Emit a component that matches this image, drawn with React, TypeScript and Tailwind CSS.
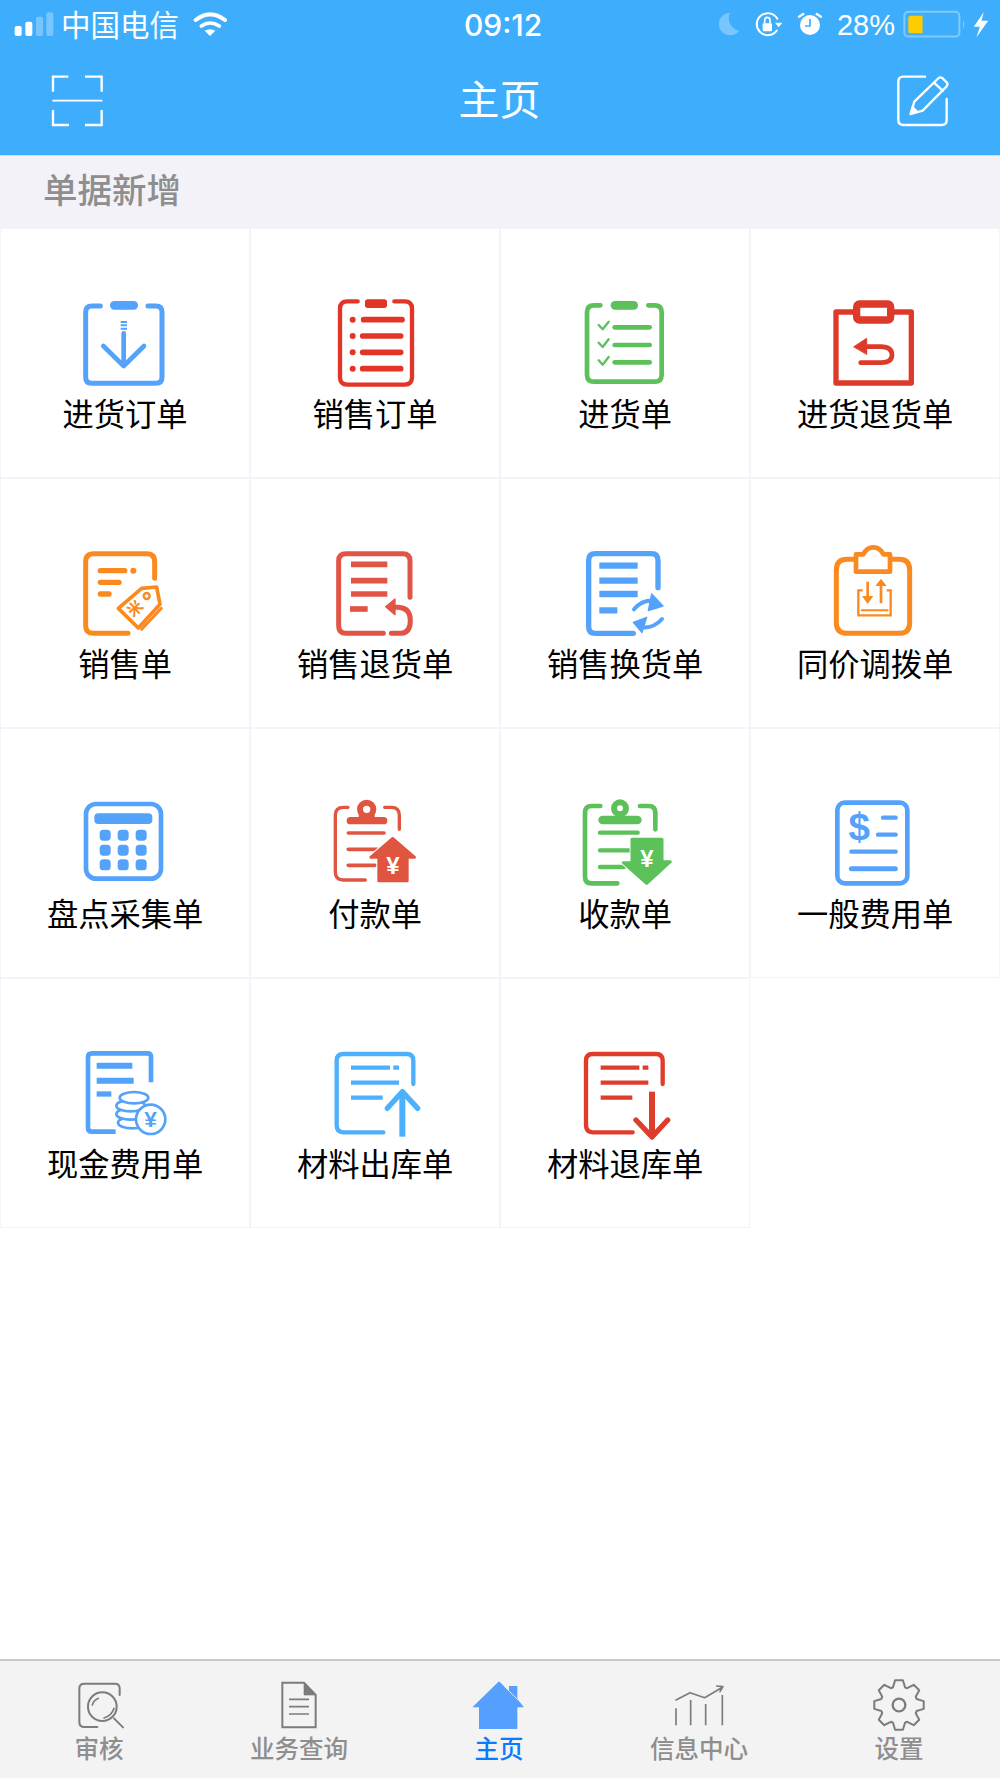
import React from 'react';

const BLUE = '#55a2fb';
const GRAY = '#7c7c7c';

// icons are drawn in the coordinates of a 3x crop, so every viewBox is 300 wide for 100px
const Icon: React.FC<{ box: string; children: React.ReactNode }> = ({ box, children }) => (
  <svg viewBox={`${box} 300 300`} className="w-[100px] h-[100px]" fill="none" strokeLinecap="round" strokeLinejoin="round">
    {children}
  </svg>
);

const Lines: React.FC<{ color: string; width: number; square?: boolean; rows: [number, number, number][] }> = ({ color, width, square, rows }) => (
  <g stroke={color} strokeWidth={width} strokeLinecap={square ? 'butt' : 'round'}>
    {rows.map(([x1, x2, y]) => (
      <path key={`${x1}-${y}`} d={`M${x1},${y} H${x2}`} />
    ))}
  </g>
);

const PurchaseOrderIcon = () => (
  <Icon box="225 60">
    <path d="M301,108 H275 Q257,108 257,126 V322 Q257,340 275,340 H468 Q486,340 486,322 V126 Q486,108 468,108 H444" stroke={BLUE} strokeWidth={15} />
    <rect x={330} y={93} width={84} height={26} rx={13} fill={BLUE} />
    <path d="M371,190 V285 M310,228 L371,288 L432,228" stroke={BLUE} strokeWidth={14} />
    <path d="M362,156 H381 M362,166 H381 M362,176 H381" stroke={BLUE} strokeWidth={6} strokeLinecap="butt" />
  </Icon>
);

const SalesOrderIcon = () => {
  const c = '#e33428';
  return (
    <Icon box="975 60">
      <path d="M1073,94 H1042 Q1020,94 1020,116 V322 Q1020,344 1042,344 H1214 Q1236,344 1236,322 V116 Q1236,94 1214,94 H1183" stroke={c} strokeWidth={13} />
      <rect x={1095} y={88} width={66} height={26} rx={8} fill={c} />
      {[149, 198, 247, 296].map((y) => (
        <circle key={y} cx={1058} cy={y} r={9} fill={c} />
      ))}
      <Lines color={c} width={17} rows={[[1091, 1206, 149], [1088, 1202, 198], [1088, 1202, 247], [1088, 1202, 296]]} />
    </Icon>
  );
};

const PurchaseIcon = () => {
  const c = '#5cc159';
  return (
    <Icon box="225 60">
      <path d="M301,106 H282 Q261,106 261,127 V314 Q261,335 282,335 H464 Q485,335 485,314 V127 Q485,106 464,106 H445" stroke={c} strokeWidth={14} />
      <rect x={332} y={93} width={82} height={26} rx={13} fill={c} />
      {[0, 53, 106].map((d) => (
        <path key={d} d={`M296,${165 + d} L308,${178 + d} L326,${155 + d}`} stroke={c} strokeWidth={7} />
      ))}
      <Lines color={c} width={14} rows={[[344, 449, 172], [344, 449, 225], [344, 449, 277]]} />
    </Icon>
  );
};

const PurchaseReturnIcon = () => {
  const c = '#de3a2a';
  return (
    <Icon box="975 60">
      <path d="M1062,126 H1008 V339 H1234 V126 H1180" stroke={c} strokeWidth={16} />
      <rect x={1070} y={102} width={102} height={48} rx={8} stroke={c} strokeWidth={22} />
      <path d="M1062,230 L1100,205 V252 Z" fill={c} stroke={c} strokeWidth={3} />
      <path d="M1095,230 H1142 Q1176,230 1176,255 Q1176,278 1142,278 H1082" stroke={c} strokeWidth={14} />
    </Icon>
  );
};

const SalesIcon = () => {
  const c = '#fa8a20';
  return (
    <Icon box="225 810">
      <path d="M464,925 V875 Q464,851 440,851 H281 Q257,851 257,875 V1067 Q257,1090 281,1090 H384" stroke={c} strokeWidth={15} />
      <Lines color={c} width={16} rows={[[301, 374, 902], [301, 357, 937], [301, 327, 972]]} />
      <circle cx={400} cy={902} r={9} fill={c} />
      <path d="M355,1015 L425,955 L470,951 L480,1003 L415,1074 Z" stroke={c} strokeWidth={11} fill="#fff" />
      <path d="M425,1078 L484,1015" stroke={c} strokeWidth={9} />
      <circle cx={440} cy={978} r={9} stroke={c} strokeWidth={7} />
      <text x={405} y={1032} textAnchor="middle" fontSize={46} fontWeight={700} fill={c} transform="rotate(-42 405 1015)">米</text>
    </Icon>
  );
};

const SalesReturnIcon = () => {
  const c = '#e05545';
  return (
    <Icon box="975 810">
      <path d="M1230,982 V872 Q1230,851 1208,851 H1038 Q1016,851 1016,872 V1068 Q1016,1090 1038,1090 H1150" stroke={c} strokeWidth={15} />
      <path d="M1174,1090 H1200 Q1231,1090 1231,1052 Q1231,1014 1195,1012 H1175" stroke={c} strokeWidth={15} />
      <path d="M1157,1010 L1185,987 V1034 Z" fill={c} stroke={c} strokeWidth={4} />
      <Lines color={c} width={17} square rows={[[1053, 1162, 883], [1053, 1162, 932], [1053, 1162, 972], [1050, 1103, 1017]]} />
    </Icon>
  );
};

const SalesExchangeIcon = () => (
  <Icon box="225 810">
    <path d="M474,953 V871 Q474,851 454,851 H286 Q266,851 266,871 V1070 Q266,1090 286,1090 H400" stroke={BLUE} strokeWidth={16} />
    <g stroke={BLUE} strokeWidth={19} strokeLinecap="butt">
      <path d="M298,887 H413 M298,932 H413 M298,972 H413 M298,1021 H352" />
    </g>
    <path d="M402,1018 Q425,990 462,992" stroke={BLUE} strokeWidth={12} />
    <path d="M455,972 L489,1008 L445,1022 Z" fill={BLUE} stroke={BLUE} strokeWidth={4} />
    <path d="M486,1047 Q462,1074 430,1072" stroke={BLUE} strokeWidth={12} />
    <path d="M400,1057 L440,1042 L426,1088 Z" fill={BLUE} stroke={BLUE} strokeWidth={4} />
  </Icon>
);

const TransferIcon = () => {
  const c = '#fa8a20';
  return (
    <Icon box="975 810">
      <path d="M1063,868 H1042 Q1009,868 1009,900 V1058 Q1009,1090 1042,1090 H1197 Q1229,1090 1229,1058 V900 Q1229,868 1197,868 H1174" stroke={c} strokeWidth={15} />
      <path d="M1068,905 V853 H1090 Q1100,832 1120,832 Q1140,832 1150,853 H1170 V905 Z" stroke={c} strokeWidth={14} fill="#fff" />
      <path d="M1088,961 H1075 V1036 H1172 V961 H1160" stroke={c} strokeWidth={7} strokeLinecap="butt" strokeLinejoin="miter" />
      <path d="M1085,1021 H1163" stroke={c} strokeWidth={6} />
      <path d="M1103,935 V985 M1143,1000 V945" stroke={c} strokeWidth={8} strokeLinecap="butt" />
      <path d="M1086,978 H1120 L1103,1002 Z M1126,948 H1160 L1143,926 Z" fill={c} />
    </Icon>
  );
};

const StocktakeIcon = () => (
  <Icon box="225 60">
    <rect x={258} y={102} width={225} height={224} rx={30} stroke={BLUE} strokeWidth={14} />
    <rect x={283} y={130} width={174} height={32} rx={12} fill={BLUE} />
    {[179, 224, 268].flatMap((y) =>
      [299, 353, 407].map((x) => <rect key={`${x}-${y}`} x={x} y={y} width={33} height={33} rx={11} fill={BLUE} />),
    )}
  </Icon>
);

const PaymentIcon = () => {
  const c = '#e05540';
  return (
    <Icon box="975 60">
      <path d="M1044,112 H1030 Q1006,112 1006,136 V306 Q1006,330 1030,330 H1096 M1154,112 H1174 Q1198,112 1198,136 V178" stroke={c} strokeWidth={10} />
      <circle cx={1100} cy={118} r={20} stroke={c} strokeWidth={18} />
      <path d="M1076,132 H1124 V150 H1076 Z" fill={c} />
      <rect x={1040} y={141} width={122} height={22} rx={11} fill={c} />
      <Lines color={c} width={11} rows={[[1045, 1152, 189], [1045, 1135, 238], [1045, 1125, 286]]} />
      <path d="M1178,203 L1246,262 H1223 V333 H1136 V262 H1112 Z" fill={c} stroke="#fff" strokeWidth={14} />
      <path d="M1178,205 L1244,262 H1222 V333 H1136 V262 H1112 Z" fill={c} stroke={c} strokeWidth={8} />
      <text x={1179} y={312} textAnchor="middle" fontSize={72} fontWeight={700} fill="#fff">¥</text>
    </Icon>
  );
};

const ReceiptIcon = () => {
  const c = '#5cc159';
  return (
    <Icon box="225 60">
      <path d="M301,108 H275 Q255,108 255,128 V320 Q255,340 275,340 H352 M420,108 H446 Q466,108 466,128 V178" stroke={c} strokeWidth={14} />
      <circle cx={360} cy={115} r={18} stroke={c} strokeWidth={18} />
      <rect x={295} y={137} width={130} height={26} rx={13} fill={c} />
      <Lines color={c} width={13} rows={[[300, 413, 188], [300, 392, 241], [300, 372, 291]]} />
      <path d="M396,208 H486 V275 H511 L440,340 L370,278 H396 Z" fill={c} stroke="#fff" strokeWidth={14} />
      <path d="M396,208 H486 V275 H511 L440,340 L370,278 H396 Z" fill={c} stroke={c} strokeWidth={9} />
      <text x={441} y={290} textAnchor="middle" fontSize={72} fontWeight={700} fill="#fff">¥</text>
    </Icon>
  );
};

const ExpenseIcon = () => (
  <Icon box="975 60">
    <rect x={1012} y={98} width={210} height={242} rx={22} stroke={BLUE} strokeWidth={14} />
    <text x={1078} y={209} textAnchor="middle" fontSize={116} fontWeight={700} fill={BLUE}>$</text>
    <Lines color={BLUE} width={13} rows={[[1149, 1187, 143], [1134, 1187, 194], [1054, 1187, 245]]} />
    <Lines color={BLUE} width={15} rows={[[1054, 1186, 296]]} />
  </Icon>
);

const CashExpenseIcon = () => (
  <Icon box="225 810">
    <path d="M453,937 V860 Q453,850 443,850 H276 Q264,850 264,862 V1073 Q264,1085 276,1085 H347" stroke={BLUE} strokeWidth={14} strokeLinecap="butt" />
    <g stroke={BLUE} strokeLinecap="butt">
      <path d="M290,887 H397 M290,932 H401" strokeWidth={18} />
      <path d="M290,972 H334" strokeWidth={16} />
    </g>
    {[[397, 1058], [392, 1032], [392, 1007], [402, 983]].map(([cx, cy]) => (
      <ellipse key={cy} cx={cx} cy={cy} rx={43} ry={17} fill="#fff" stroke={BLUE} strokeWidth={8} />
    ))}
    <circle cx={452} cy={1048} r={44} fill="#fff" stroke={BLUE} strokeWidth={8} />
    <text x={452} y={1072} textAnchor="middle" fontSize={68} fontWeight={700} fill={BLUE}>¥</text>
  </Icon>
);

const MaterialOutIcon = () => {
  const c = '#4db0fd';
  return (
    <Icon box="975 810">
      <path d="M1240,942 V872 Q1240,852 1220,852 H1030 Q1010,852 1010,872 V1066 Q1010,1087 1030,1087 H1150" stroke={c} strokeWidth={13} />
      <g stroke={c} strokeWidth={13} strokeLinecap="butt">
        <path d="M1053,893 H1170 M1180,893 H1197 M1053,938 H1197 M1053,983 H1148" />
      </g>
      <path d="M1207,972 V1100" stroke={c} strokeWidth={18} strokeLinecap="butt" />
      <path d="M1162,1015 L1207,965 L1253,1015" stroke={c} strokeWidth={16} />
    </Icon>
  );
};

const MaterialBackIcon = () => {
  const c = '#df3d2c';
  return (
    <Icon box="225 810">
      <path d="M488,942 V872 Q488,852 468,852 H278 Q258,852 258,872 V1066 Q258,1087 278,1087 H398" stroke={c} strokeWidth={13} />
      <g stroke={c} strokeWidth={13} strokeLinecap="butt">
        <path d="M302,893 H418 M428,893 H445 M302,938 H445 M302,983 H397" />
      </g>
      <path d="M456,965 V1095" stroke={c} strokeWidth={18} strokeLinecap="butt" />
      <path d="M408,1050 L456,1101 L503,1050" stroke={c} strokeWidth={16} />
    </Icon>
  );
};

const bills: { label: string; icon: React.ReactNode }[] = [
  { label: '进货订单', icon: <PurchaseOrderIcon /> },
  { label: '销售订单', icon: <SalesOrderIcon /> },
  { label: '进货单', icon: <PurchaseIcon /> },
  { label: '进货退货单', icon: <PurchaseReturnIcon /> },
  { label: '销售单', icon: <SalesIcon /> },
  { label: '销售退货单', icon: <SalesReturnIcon /> },
  { label: '销售换货单', icon: <SalesExchangeIcon /> },
  { label: '同价调拨单', icon: <TransferIcon /> },
  { label: '盘点采集单', icon: <StocktakeIcon /> },
  { label: '付款单', icon: <PaymentIcon /> },
  { label: '收款单', icon: <ReceiptIcon /> },
  { label: '一般费用单', icon: <ExpenseIcon /> },
  { label: '现金费用单', icon: <CashExpenseIcon /> },
  { label: '材料出库单', icon: <MaterialOutIcon /> },
  { label: '材料退库单', icon: <MaterialBackIcon /> },
];

const gearPath = (cx: number, cy: number, outer: number, inner: number) => {
  const pts: string[] = [];
  for (let i = 0; i < 8; i++) {
    const a = -90 + i * 45;
    [[-19, inner], [-9, outer], [9, outer], [19, inner]].forEach(([da, r]) => {
      const t = ((a + da) * Math.PI) / 180;
      pts.push(`${(cx + r * Math.cos(t)).toFixed(1)},${(cy + r * Math.sin(t)).toFixed(1)}`);
    });
  }
  return `M${pts.join(' L')} Z`;
};

const TabSvg: React.FC<{ box: string; children: React.ReactNode }> = ({ box, children }) => (
  <svg viewBox={`${box} 180 168`} className="w-[60px] h-[56px]" fill="none" stroke={GRAY} strokeLinecap="round" strokeLinejoin="round">
    {children}
  </svg>
);

const tabs: { label: string; active?: boolean; icon: React.ReactNode }[] = [
  {
    label: '审核',
    icon: (
      <TabSvg box="210 81">
        <path d="M362,135 V115 Q362,101 348,101 H256 Q241,101 241,115 V216 Q241,231 256,231 H295" strokeWidth={6} />
        <circle cx={310} cy={170} r={43} strokeWidth={6} />
        <path d="M280,165 Q283,152 298,145 M315,204 Q338,198 345,175" strokeWidth={5} />
        <path d="M345,205 L372,232" strokeWidth={6} />
      </TabSvg>
    ),
  },
  {
    label: '业务查询',
    icon: (
      <TabSvg box="810 81">
        <path d="M850,98 H915 L950,135 V232 H850 Z" strokeWidth={6} strokeLinejoin="miter" />
        <path d="M915,98 V135 H950 Z" fill={GRAY} strokeWidth={2} />
        <path d="M870,148 H930 M870,170 H930 M870,192 H930" strokeWidth={5} strokeLinecap="butt" />
      </TabSvg>
    ),
  },
  {
    label: '主页',
    active: true,
    icon: (
      <TabSvg box="1410 81">
        <path d="M1420,172 L1500,94 L1530,122 V108 H1555 V147 L1575,172 H1555 V237 H1440 V172 Z" fill="#55a0ff" stroke="none" />
        <path d="M1515,108 L1555,148" stroke="#fff" strokeWidth={3} opacity={0.7} />
      </TabSvg>
    ),
  },
  {
    label: '信息中心',
    icon: (
      <TabSvg box="505 81">
        <path d="M526,226 V175 M570,226 V150 M615,226 V162 M665,226 V135" strokeWidth={5} strokeLinecap="butt" />
        <path d="M526,150 L568,128 L612,143 L665,112 M648,108 L667,110 L658,125" strokeWidth={5} />
      </TabSvg>
    ),
  },
  {
    label: '设置',
    icon: (
      <TabSvg box="1107 81">
        <path d={gearPath(1197, 165, 75, 56)} strokeWidth={6} />
        <circle cx={1197} cy={165} r={19} strokeWidth={7} />
      </TabSvg>
    ),
  },
];

export default function App() {
  return (
    <div className="w-[1000px] h-[1778px] flex flex-col bg-white font-['Liberation_Sans','Noto_Sans_CJK_SC',sans-serif]">
      <div className="bg-[#3eaefc] text-white">
        <div className="h-[50px] flex items-center">
          <div className="w-[464px] flex items-center pl-[12px]">
            <svg viewBox="36 30 135 90" className="w-[45px] h-[30px]" fill="#fff">
              <rect x={44} y={78} width={21} height={30} rx={6} />
              <rect x={76} y={65} width={21} height={43} rx={6} />
              <rect x={108} y={50} width={21} height={58} rx={6} opacity={0.3} />
              <rect x={139} y={37} width={21} height={71} rx={6} opacity={0.3} />
            </svg>
            <span className="ml-[4px] mt-[2px] text-[29.5px] leading-none">中国电信</span>
            <svg viewBox="570 30 120 90" className="ml-[11px] w-[40px] h-[30px]" fill="none" stroke="#fff" strokeLinecap="round">
              <path d="M587,60 Q630,26 675,60" strokeWidth={12} />
              <path d="M604,78 Q630,60 658,78" strokeWidth={11} />
              <path d="M614,92 Q630,83 646,92 L630,108 Z" fill="#fff" stroke="none" />
            </svg>
          </div>
          <span className="font-['Inter',sans-serif] text-[30px] font-medium leading-none">09:12</span>
          <div className="flex-1 flex items-center justify-end pr-[10px]">
            <svg viewBox="648 30 72 90" className="w-[24px] h-[30px]">
              <path d="M690,38 A34,34 0 1 0 718,92 A38,38 0 0 1 690,38 Z" fill="#fff" opacity={0.3} />
            </svg>
            <svg viewBox="762 30 90 90" className="ml-[14px] w-[30px] h-[30px]" fill="none" stroke="#fff">
              <path d="M832,56 A33,33 0 1 0 830,92" strokeWidth={6} strokeLinecap="round" />
              <path d="M825,68 H847 L836,82 Z" fill="#fff" stroke="none" />
              <rect x={788} y={70} width={28} height={24} rx={3} fill="#fff" stroke="none" />
              <path d="M794,70 V62 Q794,52 802,52 Q810,52 810,62 V70" strokeWidth={5} />
            </svg>
            <svg viewBox="888 30 84 90" className="ml-[12px] w-[28px] h-[30px]" fill="none">
              <circle cx={930} cy={75} r={30} fill="#fff" />
              <path d="M930,57 V78 H915" stroke="#3eaefc" strokeWidth={5} />
              <path d="M897,50 L910,42 M950,42 L963,50" stroke="#fff" strokeWidth={7} strokeLinecap="round" />
            </svg>
            <span className="ml-[13px] text-[29px] leading-none">28%</span>
            <svg viewBox="1206 30 196 90" className="ml-[7px] w-[65px] h-[30px]" fill="none">
              <rect x={1213} y={35} width={166} height={75} rx={12} stroke="#fff" strokeOpacity={0.35} strokeWidth={6} />
              <path d="M1233,47 H1268 V100 H1233 Q1225,100 1225,92 V55 Q1225,47 1233,47 Z" fill="#ffcc00" />
              <path d="M1390,60 Q1398,72 1390,87 Z" fill="#fff" opacity={0.35} />
            </svg>
            <svg viewBox="1414 30 56 90" className="ml-[4px] w-[19px] h-[30px]">
              <path d="M1452,36 L1422,80 H1440 L1430,112 L1465,62 H1445 Z" fill="#fff" />
            </svg>
          </div>
        </div>
        <div className="h-[105px] flex items-center justify-between pl-[48px] pr-[47px] pb-[3px]">
          <svg viewBox="144 213 180 180" className="w-[60px] h-[60px]" fill="none" stroke="#fff" strokeWidth={7}>
            <path d="M159,275 V230 H205 M255,230 H305 V275 M159,330 V375 H207 M255,375 H305 V330" />
            <path d="M157,302 H307" strokeWidth={5} />
          </svg>
          <span className="text-[41px] leading-none mr-[2px]">主页</span>
          <svg viewBox="1179 213 180 180" className="w-[60px] h-[60px]" fill="none" stroke="#fff" strokeWidth={7} strokeLinecap="round" strokeLinejoin="round">
            <path d="M1275,230 H1210 Q1195,230 1195,245 V360 Q1195,375 1210,375 H1325 Q1340,375 1340,360 V297" />
            <path d="M1232,342 L1243,305 L1316,234 Q1322,230 1328,235 L1340,247 Q1345,253 1340,259 L1268,332 Z" />
            <path d="M1302,248 L1328,272" />
            <path d="M1232,342 L1238,322 L1252,336 Z" fill="#fff" />
          </svg>
        </div>
      </div>

      <div className="h-[73px] flex items-center pl-[43px] pb-[1px] bg-[#f2f2f8] border-t border-[#d6d6dc] text-[#8e8e8e] text-[34.5px] font-medium leading-none">
        单据新增
      </div>

      <div className="flex-1 grid grid-cols-4 content-start">
        {bills.map((bill) => (
          <div key={bill.label} className="h-[250px] flex flex-col items-center pt-[61px] border border-[#f3f3f9]">
            {bill.icon}
            <span className="mt-[6px] text-[31.25px] leading-[40px] text-black">{bill.label}</span>
          </div>
        ))}
      </div>

      <div className="h-[119px] flex bg-[#f3f3f3] border-t-2 border-[#c9c9c9]">
        {tabs.map((tab) => (
          <div key={tab.label} className="flex-1 flex flex-col items-center pt-[16px] pr-[2px]">
            {tab.icon}
            <span className={`mt-[2px] text-[24.5px] leading-[30px] font-medium ${tab.active ? 'text-[#0a7aff]' : 'text-[#8e8e8e]'}`}>
              {tab.label}
            </span>
          </div>
        ))}
      </div>
    </div>
  );
}
